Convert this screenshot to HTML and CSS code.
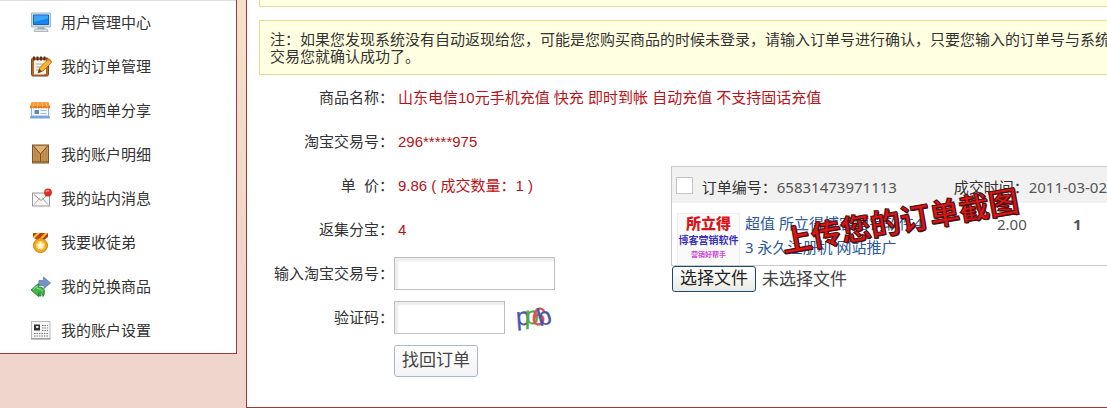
FILE: index.html
```html
<!DOCTYPE html>
<html lang="zh-CN">
<head>
<meta charset="utf-8">
<title>找回订单</title>
<link rel="stylesheet" href="styles.css">
</head>
<body>
<div class="page">
  <nav class="sidebar">
    <a class="nav-item" href="#">
      <svg class="icon" viewBox="0 0 22 22"><path d="M1.500 2h19v14h-19z" fill="#c9dcec" stroke="#9db8cc"/><path d="M3.500 4h15v9.500h-15z" fill="#1687ee" stroke="#1a62ad"/><path d="M4 4.500h14v3L4 11z" fill="#39a4fa"/><path d="M8 16h6l1 2H7z" fill="#a5b0b8"/><path d="M5 18h12l1 2.500H4z" fill="#dde2e5" stroke="#9aa3a9" stroke-width=".7"/></svg>
      <span>用户管理中心</span></a>
    <a class="nav-item" href="#">
      <svg class="icon" viewBox="0 0 22 22"><rect x="1.500" y="3" width="17" height="18" rx="1.500" fill="#b5662c" stroke="#7d431c"/><path d="M4 5h12v13.500l-2 1H4z" fill="#f8f5e8"/><path d="M6 9h7M6 12h6M6 15h4" stroke="#aaa79f"/><path d="M4 1.500v4M7.500 1.500v4M11 1.500v4M14.500 1.500v4" stroke="#55251a" stroke-width="1.800"/><path d="M8 18l1.500-5L18 4.500l3.500 3L13 16z" fill="#f6b52c" stroke="#a76612" stroke-width=".8"/><path d="M8 18l1.300-4 2.700 2.500z" fill="#5a3b20"/><path d="M18 4.500l3.500 3 .5-1.500-2.500-2.500z" fill="#e2863f"/></svg>
      <span>我的订单管理</span></a>
    <a class="nav-item" href="#">
      <svg class="icon" viewBox="1 0 22 22"><path d="M2.500 8h17v9h-17z" fill="#f4f9fd" stroke="#8fb4d6"/><path d="M5.500 11h4.500v4H5.500z" fill="#5d8cbc"/><path d="M11.500 11.500h6M11.500 14.500h6" stroke="#a5bdd2"/><path d="M2.500 3h17l1.500 4.500H1z" fill="#fb9837"/><path d="M1 7h20v1.500q-1.300 2-2.600 0-1.200 2-2.500 0-1.200 2-2.500 0-1.200 2-2.400 0-1.300 2-2.500 0-1.300 2-2.500 0-1.300 2-2.500 0-1.300 2-2.500 0z" fill="#ee7412"/><path d="M5 3L4 8M9 3l-.5 5M13 3l.5 5M17 3l1 5" stroke="#fdc07a"/><rect x="1" y="17" width="20" height="2.500" rx="1" fill="#77a8db"/></svg>
      <span>我的晒单分享</span></a>
    <a class="nav-item" href="#">
      <svg class="icon" viewBox="0 0 22 22"><rect x="2.500" y="2" width="16" height="18" fill="#c69555" stroke="#805328"/><path d="M5 2.500v17M8 8v11.500M13 8v11.500M16 2.500v17" stroke="#a97939" stroke-width=".7"/><path d="M3.500 3h14l-7 8z" fill="#ddb278"/><path d="M3.500 3l7 8 7-8M10.500 11v8.500" fill="none" stroke="#795027"/><path d="M3 18.500h15" stroke="#986730"/></svg>
      <span>我的账户明细</span></a>
    <a class="nav-item" href="#">
      <svg class="icon" viewBox="0 0 22 22"><rect x="2.500" y="6" width="17" height="13" fill="#f5f5f3" stroke="#999"/><path d="M4 17.500l5.500-6M18 17.500l-5.500-6" stroke="#aaa"/><path d="M4 7.500l7 6 7-6" fill="none" stroke="#999"/><circle cx="18" cy="5.500" r="3.900" fill="#d82b29"/><ellipse cx="17.500" cy="4" rx="2" ry="1.200" fill="#f27a72"/></svg>
      <span>我的站内消息</span></a>
    <a class="nav-item" href="#">
      <svg class="icon" viewBox="0 0 22 22"><path d="M3 2h15v4l-5 4H8L3 6z" fill="#bd3d13"/><path d="M3 6l4-4h3L4.500 7.500zM8 9l7-7h3L11 9z" fill="#f6c233"/><circle cx="10.500" cy="14.500" r="7" fill="#f5aa1c" stroke="#d37c11"/><circle cx="10.500" cy="14.500" r="4.800" fill="#ffda66" stroke="#e99c17" stroke-width=".7"/><path d="M10.500 10.300l1.300 2.700 2.900.4-2.100 2 .5 2.900-2.600-1.400-2.600 1.400.5-2.900-2.100-2 2.900-.4z" fill="#fff9dc"/></svg>
      <span>我要收徒弟</span></a>
    <a class="nav-item" href="#">
      <svg class="icon" viewBox="0 -1 22 22"><path d="M13.500 1l7 6-6.500 5.500V9.500h-5v-5h4.500z" fill="#7196c6" stroke="#577daf" stroke-width=".8"/><path d="M1 14l7.500-6.500V11q6.500 0 6 5.500-.3 2.500-1.500 4-.5-4-2-4.300V20H9v-3.500H8.500v4z" fill="#43b84a" stroke="#21842c" stroke-width=".9"/><path d="M3 13.500l4-3.500v2.500q4 0 5.500 2.500" fill="none" stroke="#91e08c"/></svg>
      <span>我的兑换商品</span></a>
    <a class="nav-item" href="#">
      <svg class="icon" viewBox="0 0 22 22"><rect x="1.500" y="2.500" width="18.500" height="17" fill="#f7f7f7" stroke="#b9b9b9"/><path d="M1 20h19.500" stroke="#888"/><path d="M4 5.500h6v6H4z" fill="#333"/><path d="M6 7h2.500v2H6z" fill="#ddd"/><path d="M12 6.500h6M12 9h6M12 11.500h6M4 14.500h14M4 17h14" stroke="#777" stroke-dasharray="1.500 1"/></svg>
      <span>我的账户设置</span></a>
  </nav>

  <main class="main">
    <div class="note note-previous"></div>
    <p class="note">注：如果您发现系统没有自动返现给您，可能是您购买商品的时候未登录，请输入订单号进行确认，只要您输入的订单号与系统<br>交易您就确认成功了。</p>
    <form class="form">
      <span class="label">商品名称：</span>
      <span class="value value-wide">山东电信10元手机充值 快充 即时到帐 自动充值 不支持固话充值</span>
      <span class="label">淘宝交易号：</span>
      <span class="value">296*****975</span>
      <span class="label">单&nbsp; 价：</span>
      <span class="value">9.86 ( 成交数量：1 )</span>
      <span class="label">返集分宝：</span>
      <span class="value">4</span>
      <label class="label" for="trade">输入淘宝交易号：</label>
      <div class="field"><input class="text-input" id="trade" type="text"></div>
      <label class="label" for="code">验证码：</label>
      <div class="field">
        <input class="text-input text-input-short" id="code" type="text">
        <svg class="captcha" viewBox="0 0 38 34"><text x="0" y="25" fill="#4b57b5" stroke="#4b57b5" transform="rotate(-4 6 18)">p</text><text x="9" y="24" fill="#55a93d" stroke="#55a93d" transform="rotate(2 16 18)">p</text><text x="16" y="25" fill="#df4b50" stroke="#df4b50" transform="rotate(10 22 16)">6</text><text x="21" y="25" fill="#4755aa" stroke="#4755aa" transform="rotate(-16 28 16)">b</text></svg>
      </div>
      <div class="field field-submit"><button class="submit" type="button">找回订单</button></div>

      <section class="proof">
        <div class="order">
          <div class="order-head">
            <input class="order-check" type="checkbox" aria-label="订单编号 65831473971113">
            <span class="order-number"><span class="order-key">订单编号：</span>65831473971113</span>
            <span><span class="order-key">成交时间：</span>2011-03-02</span>
          </div>
          <div class="order-body">
            <div class="thumb"><b class="thumb-name">所立得</b><b class="thumb-kind">博客营销软件</b><b class="thumb-tag">营销好帮手</b></div>
            <a class="order-title" href="#">超值 所立得博客营销软件4.<br>3 永久注册机 网站推广</a>
            <span class="order-price">2.00</span>
            <b class="order-count">1</b>
          </div>
          <strong class="stamp">上传您的订单截图</strong>
        </div>
        <div class="upload">
          <input class="file-input" id="file" type="file">
          <label class="file-button" for="file">选择文件</label>
          <span>未选择文件</span>
        </div>
      </section>
    </form>
  </main>
</div>
</body>
</html>
```
FILE: styles.css
```css
* {
  box-sizing: border-box;
}

body {
  margin: 0;
  background: linear-gradient(#f5e1c9, #efd5cb 260px);
  color: #333;
  font: 15px/17px "Liberation Sans", "Noto Sans CJK SC", sans-serif;
  overflow-x: hidden;
}

.page {
  display: flex;
  align-items: flex-start;
  gap: 9px;
}

.sidebar {
  flex: none;
  width: 237px;
  padding-bottom: 1px;
  background: #fff;
  border: solid #a03a35;
  border-width: 0 1px 1px 0;
  box-shadow: inset 0 1px #ddd;
}

.nav-item {
  display: flex;
  align-items: center;
  gap: 9px;
  height: 44px;
  padding-left: 30px;
  color: #333;
  text-decoration: none;
}

.icon {
  width: 22px;
  height: 22px;
}

.main {
  flex: 1;
  min-width: 0;
  padding-bottom: 24px;
  background: #fff;
  border: solid #a03a35;
  border-width: 0 0 1px 1px;
}

.note {
  margin: 0 0 0 12px;
  padding: 10px 0 9px 10px;
  background: #ffffe1;
  border: solid #e6dc98;
  border-width: 1px 0 1px 1px;
  overflow: hidden;
  white-space: nowrap;
}

.note-previous {
  height: 7px;
  margin-bottom: 13px;
  padding: 0;
  border-top: 0;
}

.form {
  display: grid;
  grid-template-columns: 147px 277px minmax(0, 1fr);
  grid-auto-rows: 44px;
  align-items: center;
}

.label {
  grid-column: 1;
  text-align: right;
  white-space: nowrap;
}

.value {
  grid-column: 2;
  padding-left: 4px;
  color: #b91218;
  white-space: nowrap;
}

.value-wide {
  grid-column: 2 / 4;
}

.field {
  grid-column: 2;
  display: flex;
  align-items: center;
  gap: 11px;
}

.text-input {
  width: 161px;
  height: 33px;
  padding: 0 8px;
  background: #fff;
  border: 1px solid #bfbfbf;
  box-shadow: inset 3px 3px 2px #eee;
  font: inherit;
}

.text-input-short {
  width: 111px;
}

.captcha {
  width: 38px;
  height: 34px;
  font: 25px "Liberation Sans", sans-serif;
  stroke-width: 0.3;
  overflow: visible;
}

.submit {
  height: 32px;
  padding: 0 7px;
  background: linear-gradient(#fff, #f3f3f5);
  border: 1px solid #a9b9cb;
  border-radius: 3px;
  color: #444;
  font: 17px/28px "Liberation Sans", "Noto Sans CJK SC", sans-serif;
}

.proof {
  grid-column: 3;
  grid-row: 3 / 7;
  align-self: start;
  padding-top: 3px;
}

.order {
  position: relative;
  border: solid #c9c9c9;
  border-width: 1px 0 1px 1px;
  color: #555;
  font-family: "Noto Sans", "Noto Sans CJK SC", sans-serif;
  overflow: hidden;
  white-space: nowrap;
}

.order-head {
  display: flex;
  align-items: center;
  height: 36px;
  padding: 4px 0 0 4px;
  background: #f1f1f1;
}

.order-check {
  appearance: none;
  width: 17px;
  height: 17px;
  margin: 0 9px 4px 0;
  background: #fff;
  border: 1px solid #c5c5c5;
}

.order-number {
  width: 256px;
}

.order-key {
  color: #333;
}

.order-body {
  display: flex;
  height: 62px;
  padding-left: 5px;
  line-height: 24px;
}

.thumb {
  display: flex;
  flex-direction: column;
  align-items: center;
  width: 63px;
  margin: 10px 5px 0 0;
  background: #fafafa;
  border: 1px solid #eee;
  border-bottom: 0;
}

.thumb-name {
  color: #db1519;
  font-weight: 900;
  line-height: 19px;
}

.thumb-kind {
  color: #3a30c4;
  font-size: 10px;
  line-height: 14px;
}

.thumb-tag {
  color: #cc45d8;
  font-size: 7px;
  line-height: 15px;
}

.order-title {
  width: 252px;
  padding-top: 8px;
  color: #2a57a0;
  text-decoration: none;
}

.order-price {
  width: 76px;
  padding-top: 9px;
}

.order-count {
  padding-top: 9px;
}

.stamp {
  position: absolute;
  left: 108px;
  top: 34px;
  color: #dd1416;
  font-size: 30px;
  font-weight: 700;
  line-height: 40px;
  transform: rotate(-10deg);
  -webkit-text-stroke: 1px #4b1010;
  text-shadow: 1px 1px #4b1010;
}

.upload {
  display: flex;
  align-items: center;
  gap: 6px;
  padding: 0 1px;
  color: #444;
  font-size: 17px;
  white-space: nowrap;
}

.file-input {
  position: absolute;
  width: 1px;
  height: 1px;
  opacity: 0;
}

.file-button {
  padding: 0 7px;
  background: linear-gradient(#fff, #ebeae4);
  border: 1px solid #164a72;
  border-radius: 3px;
  color: #222;
  line-height: 24px;
}
```
